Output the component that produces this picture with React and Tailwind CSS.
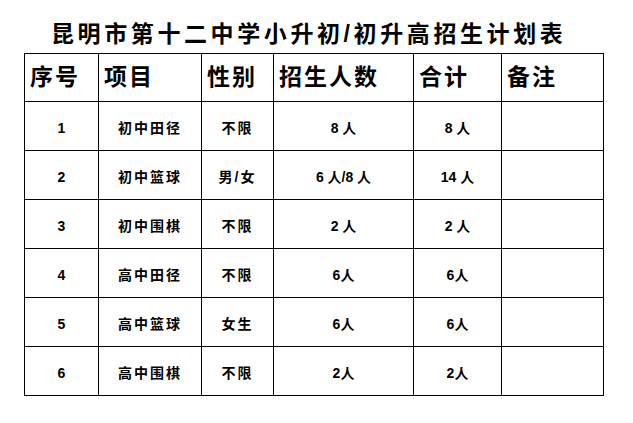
const rows = [
  ['1', '初中田径', '不限', '8 人', '8 人'],
  ['2', '初中篮球', '男/女', '6 人/8 人', '14 人'],
  ['3', '初中围棋', '不限', '2 人', '2 人'],
  ['4', '高中田径', '不限', '6人', '6人'],
  ['5', '高中篮球', '女生', '6人', '6人'],
  ['6', '高中围棋', '不限', '2人', '2人'],
];

const headers = ['序号', '项目', '性别', '招生人数', '合计', '备注'];
const widths = ['w-[74px]', 'w-[103px]', 'w-[72px]', 'w-[140px]', 'w-[88px]', 'w-[102px]'];

const cjk = "font-['Liberation_Sans','Noto_Sans_CJK_SC',sans-serif]";

export default function App() {
  return (
    <div className={`h-[423px] w-[633px] bg-white text-black ${cjk}`}>
      <div className="flex h-[53px] items-end pb-[7px] pl-[51px]">
        <h1 className="text-[23px] font-bold leading-none tracking-[3.6px]">
          昆明市第十二中学小升初/初升高招生计划表
        </h1>
      </div>
      <table className="ml-[24px] w-[580px] table-fixed border-collapse">
        <colgroup>
          {widths.map((w, i) => (
            <col key={i} className={w} />
          ))}
        </colgroup>
        <thead>
          <tr className="h-[48px]">
            {headers.map((h) => (
              <th
                key={h}
                className="border-[1.5px] border-black px-[5px] text-left text-[23px] font-bold leading-none tracking-[2px]"
              >
                {h}
              </th>
            ))}
          </tr>
        </thead>
        <tbody>
          {rows.map((r) => (
            <tr key={r[0]} className="h-[49px]">
              {r.map((c, i) => (
                <td
                  key={i}
                  className={`border-[1.5px] border-black pt-[3px] text-center text-[14px] font-bold leading-none ${
                    i === 1 || i === 2 ? 'tracking-[2px]' : ''
                  }`}
                >
                  {c}
                </td>
              ))}
              <td className="border-[1.5px] border-black" />
            </tr>
          ))}
        </tbody>
      </table>
    </div>
  );
}
